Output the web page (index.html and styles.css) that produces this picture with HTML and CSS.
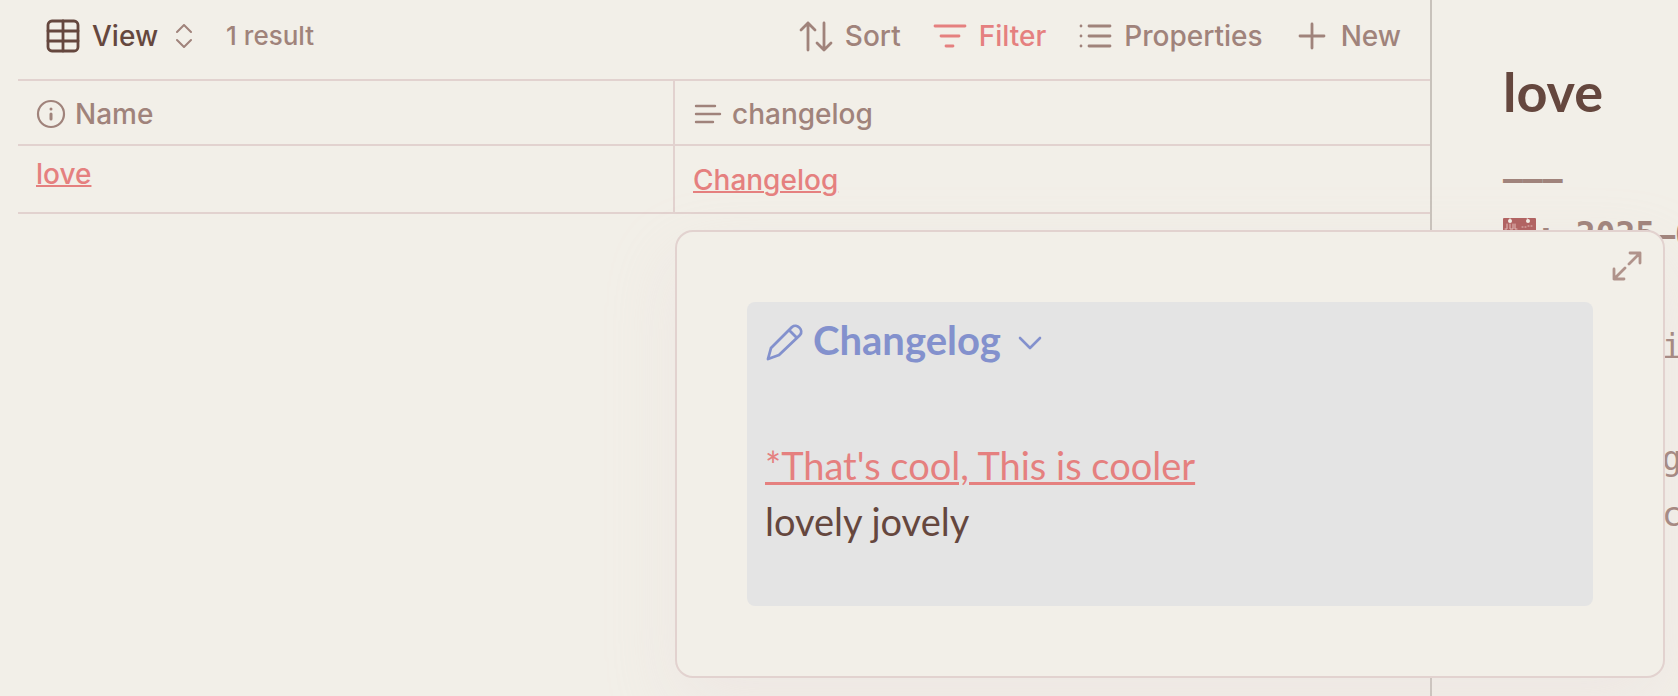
FILE: index.html
```html
<!DOCTYPE html>
<html lang="en">
<head>
<meta charset="utf-8">
<meta name="viewport" content="width=device-width, initial-scale=1">
<title>love</title>
<link rel="stylesheet" href="styles.css">
</head>
<body>
<div class="workspace">
  <main class="base">
    <div class="toolbar">
      <button class="tool view" type="button">
        <svg class="icon" viewBox="0 0 34 34" stroke-width="2.8"><rect x="2" y="2" width="30" height="30" rx="4"/><path d="M17 2v30M2 12h30M2 22h30"/></svg>
        <span>View</span>
        <svg class="chevrons" viewBox="0 0 16 24" stroke-width="2"><path d="M1 8l7-7 7 7M1 16l7 7 7-7"/></svg>
      </button>
      <span class="count">1 result</span>
      <div class="actions">
        <button class="tool" type="button">
          <svg class="icon" viewBox="0 0 34 34" stroke-width="2.8"><path d="M9 31V4M2 11l7-7 7 7M25 4v27M18 24l7 7 7-7"/></svg>
          <span>Sort</span>
        </button>
        <button class="tool active" type="button">
          <svg class="icon" viewBox="0 0 34 34" stroke-width="2.8"><path d="M2 7h30M8 17h18M13 27h7"/></svg>
          <span>Filter</span>
        </button>
        <button class="tool" type="button">
          <svg class="icon" viewBox="0 0 34 34" stroke-width="2.8"><path d="M11 7h21M11 17h21M11 27h21M3 7h0M3 17h0M3 27h0"/></svg>
          <span>Properties</span>
        </button>
        <button class="tool" type="button">
          <svg class="icon" viewBox="0 0 34 34" stroke-width="2.8"><path d="M5 17h24M17 5v24"/></svg>
          <span>New</span>
        </button>
      </div>
    </div>
    <table class="grid">
      <thead>
        <tr>
          <th class="col-name" scope="col"><span class="head">
            <svg class="small" viewBox="0 0 30 30" stroke-width="2.2"><circle cx="15" cy="15" r="13"/><path stroke-width="3" d="M15 15v5M15 10h0"/></svg>Name</span></th>
          <th scope="col"><span class="head">
            <svg class="small" viewBox="0 0 30 30" stroke-width="2.4"><path d="M3 7h19M3 15h24M3 23h17"/></svg>changelog</span></th>
        </tr>
      </thead>
      <tbody>
        <tr>
          <td class="file"><a href="#love">love</a></td>
          <td class="value"><a href="#changelog">Changelog</a></td>
        </tr>
      </tbody>
    </table>
  </main>
  <aside class="note" id="love">
    <h1>love</h1>
    <div class="source">
      <div class="strong">–––</div>
      <div class="date strong"><svg class="calendar" viewBox="0 0 33 36" role="img" aria-label="date"><rect class="sheet" width="33" height="36" rx="1"/><rect class="page" y="13" width="33" height="23"/><path class="ring" d="M7 0v2M24 0l1 2"/><circle class="hole" cx="7" cy="3" r="2"/><circle class="hole" cx="25" cy="3" r="2"/><path class="marks" d="M4 6v5H2M7 6v5h3V6M12 6v5h2M19 9h1M22 9h1M25 8h1M28 8h1"/></svg><span>: 2025–0</span></div>
      <div><br></div>
      <div class="inset">i</div>
      <div><br></div>
      <div class="inset">g</div>
      <div class="inset">c</div>
    </div>
  </aside>
  <section class="popover">
    <button class="expand" type="button" aria-label="Open">
      <svg viewBox="0 0 30 30" stroke-width="2.8"><path d="M18 2h10v10M28 2L17 13M2 18v10h10M2 28l11-11"/></svg>
    </button>
    <div class="callout" id="changelog">
      <h2 class="callout-title">
        <svg class="pencil" viewBox="0 0 38 38" stroke-width="2.8"><path d="M3 36l3-11L27 4c5-4 12 3 8 8L14 32zM24 7l8 8"/></svg>
        <span>Changelog</span>
        <svg class="fold" viewBox="0 0 24 14" stroke-width="2.6"><path d="M2 2l10 10L22 2"/></svg>
      </h2>
      <p><a href="#cool">*That's cool, This is cooler</a><br>lovely jovely</p>
    </div>
  </section>
</div>
</body>
</html>
```
FILE: styles.css
```css
:root {
  --bg: #f2efe8;
  --text: #65473e;
  --muted: #a0837b;
  --accent: #e5807f;
  --blue: #8391cd;
  --line: #e2d2cf;
}

* { box-sizing: border-box; }

body {
  margin: 0;
  background: var(--bg);
  color: var(--text);
  font: 450 28px/36px Inter, "Liberation Sans", sans-serif;
}

a { color: var(--accent); text-decoration-thickness: 2px; }

svg {
  flex: none;
  fill: none;
  stroke: currentColor;
  stroke-linecap: round;
  stroke-linejoin: round;
}

button {
  padding: 0;
  border: 0;
  background: none;
  color: inherit;
  font: inherit;
}

.workspace {
  position: relative;
  display: flex;
  min-height: 100vh;
  overflow: hidden;
}

.base {
  flex: none;
  width: calc(100% - 246px);
  padding-left: 18px;
  border-right: 2px solid #c8c2bb;
}

.toolbar {
  display: flex;
  align-items: center;
  height: 79px;
  padding: 0 29px 8px 28px;
  color: var(--muted);
}

.tool { display: flex; align-items: center; gap: 12px; }
.view { color: var(--text); }
.active { color: var(--accent); }
.icon { width: 34px; height: 34px; }
.chevrons { width: 16px; height: 24px; margin-left: 6px; color: var(--muted); }
.count { margin-left: 34px; font-size: 26px; }
.actions { display: flex; gap: 32px; margin-left: auto; }

.grid {
  width: 100%;
  border-collapse: collapse;
  table-layout: fixed;
}

.grid th, .grid td {
  padding: 0 18px;
  border: 2px solid var(--line);
  border-right: 0;
  text-align: left;
  font-weight: 450;
}

.grid th:first-child, .grid td:first-child { border-left: 0; }
.grid th { height: 65px; padding-top: 2px; color: var(--muted); }
.grid td { height: 68px; padding-top: 2px; }
.grid .file { padding-bottom: 12px; }
.col-name { width: 656px; }
.head { display: flex; align-items: center; gap: 9px; }
.small { width: 30px; height: 30px; }

.note { flex: 1; min-width: 0; padding: 60px 0 0 71px; overflow: hidden; }

h1 {
  margin: 0 0 27px;
  font: 700 54px/64px Lato, sans-serif;
}

.source {
  color: var(--muted);
  font: 33px/56px "DejaVu Sans Mono", monospace;
  white-space: nowrap;
}

.date { display: flex; }
.strong { font-weight: 700; }
.inset { padding-left: 8ch; }
.calendar { width: 33px; height: 36px; margin-top: 11px; }
.sheet { fill: #b0605f; stroke: none; }
.page { fill: #f4eeee; stroke: none; }
.hole { fill: #f2eee7; stroke: none; }
.ring, .marks { stroke: #e3bcb8; stroke-width: 1; }

.popover {
  position: absolute;
  top: 230px;
  right: 13px;
  width: 990px;
  padding: 70px;
  border: 2px solid var(--line);
  border-radius: 18px;
  background: var(--bg);
  box-shadow: 0 28px 70px rgba(225, 210, 214, 0.24);
}

.expand { position: absolute; top: 19px; right: 21px; color: #b0938b; }
.expand svg { display: block; width: 30px; height: 30px; }

.callout {
  padding: 10px 18px 57px;
  border-radius: 8px;
  background: #e4e4e4;
  font: 38px/56px Lato, sans-serif;
}

.callout-title {
  display: flex;
  align-items: center;
  gap: 10px;
  margin: 0 0 69px;
  color: var(--blue);
  font: 700 40px/56px Lato, sans-serif;
}

.pencil { width: 38px; height: 38px; margin-top: 4px; }
.fold { width: 24px; height: 14px; margin: 6px 0 0 7px; }
.callout p { margin: 0; }
.callout a { text-decoration-thickness: 3px; }
```
